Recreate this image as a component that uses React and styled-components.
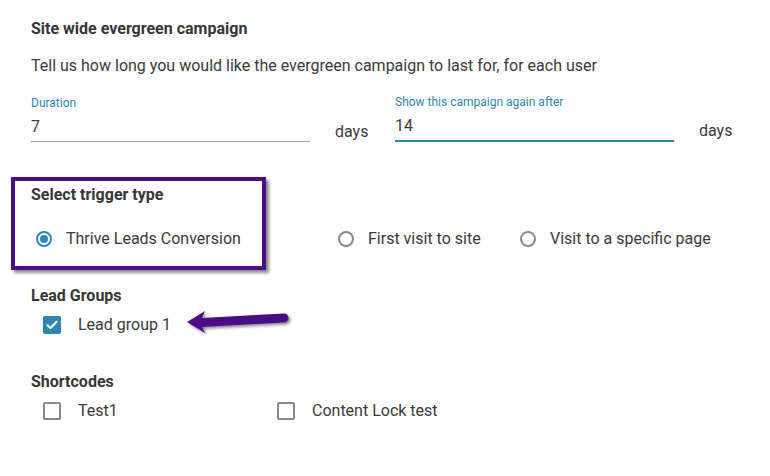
import React from 'react'
import styled, { createGlobalStyle } from 'styled-components'

const GlobalStyle = createGlobalStyle`
    body {
        margin: 0;
        background: #ffffff;
        font-family: Roboto, "Liberation Sans", sans-serif;
        color: #3a3a3a;
    }
`

const Page = styled.div`
    width: 770px;
    height: 476px;
    padding: 19px 0 0 31px;
    box-sizing: border-box;
    overflow: hidden;
`

const Heading = styled.h3`
    margin: ${(p) => p.$top || 0}px 0 0;
    font-size: 16px;
    line-height: 20px;
    font-weight: bold;
    color: #363636;
`

const Description = styled.p`
    margin: 17px 0 0;
    font-size: 16px;
    line-height: 20px;
`

const Fields = styled.div`
    margin-top: 19px;
    display: grid;
    grid-template-columns: 364px 364px;
`

const FieldRow = styled.div`
    display: flex;
    align-items: flex-end;
`

const Field = styled.div`
    width: 279px;
`

const FieldLabel = styled.div`
    font-size: 12px;
    line-height: 14px;
    color: #2f86b3;
`

const FieldInput = styled.div`
    margin-top: 7px;
    font-size: 16px;
    line-height: 20px;
    padding-bottom: 4px;
    color: #3a3a3a;
    border-bottom: ${(p) => (p.$active ? '2px solid #2f86b3' : '1px solid #9e9e9e')};
`

const Unit = styled.span`
    margin: 0 0 ${(p) => (p.$active ? 1 : 0)}px 25px;
    font-size: 16px;
    line-height: 20px;
`

const Section = styled.div`
    position: relative;
`

const Highlight = styled.div`
    position: absolute;
    left: -20px;
    top: -8px;
    width: 255px;
    height: 93px;
    box-sizing: border-box;
    border: 4px solid #4a0d87;
    box-shadow: 3px 3px 3px rgba(0, 0, 0, 0.45);
    pointer-events: none;
`

const RadioRow = styled.div`
    margin: 22px 0 0 5px;
    display: grid;
    grid-template-columns: 302px 182px auto;
    height: 24px;
    align-items: center;
`

const Option = styled.label`
    display: flex;
    align-items: center;
    font-size: 16px;
    line-height: 20px;
    color: #3a3a3a;
`

const Radio = styled.span`
    width: 16px;
    height: 16px;
    box-sizing: border-box;
    border-radius: 50%;
    border: 2px solid ${(p) => (p.$checked ? '#2f86b3' : '#8a8a8a')};
    margin-right: 14px;
    display: flex;
    align-items: center;
    justify-content: center;
    &::after {
        content: '';
        width: 8px;
        height: 8px;
        border-radius: 50%;
        background: ${(p) => (p.$checked ? '#2f86b3' : 'transparent')};
    }
`

const CheckRow = styled.div`
    position: relative;
    margin: 9px 0 0 12px;
    display: grid;
    grid-template-columns: 234px auto;
    height: 20px;
    align-items: center;
`

const Checkbox = styled.span`
    width: 18px;
    height: 18px;
    box-sizing: border-box;
    border-radius: 2px;
    margin-right: 17px;
    display: flex;
    align-items: center;
    justify-content: center;
    background: ${(p) => (p.$checked ? '#2f86b3' : '#ffffff')};
    border: 2px solid ${(p) => (p.$checked ? '#2f86b3' : '#8a8a8a')};
`

const Arrow = styled.svg`
    position: absolute;
    left: 137px;
    top: -15px;
    filter: drop-shadow(2px 2px 1.5px rgba(0, 0, 0, 0.45));
`

const Tick = () => (
    <svg width="12" height="10" viewBox="0 0 12 10">
        <path d="M1.5 5.2 L4.6 8 L10.5 1.8" fill="none" stroke="#ffffff" strokeWidth="2" strokeLinecap="round" strokeLinejoin="round" />
    </svg>
)

const App = () => (
    <Page>
        <GlobalStyle />
        <Heading>Site wide evergreen campaign</Heading>
        <Description>Tell us how long you would like the evergreen campaign to last for, for each user</Description>

        <Fields>
            <FieldRow>
                <Field>
                    <FieldLabel>Duration</FieldLabel>
                    <FieldInput>7</FieldInput>
                </Field>
                <Unit>days</Unit>
            </FieldRow>
            <FieldRow>
                <Field>
                    <FieldLabel>Show this campaign again after</FieldLabel>
                    <FieldInput $active>14</FieldInput>
                </Field>
                <Unit $active>days</Unit>
            </FieldRow>
        </Fields>

        <Section>
            <Heading $top={43}>Select trigger type</Heading>
            <RadioRow>
                <Option><Radio $checked />Thrive Leads Conversion</Option>
                <Option><Radio />First visit to site</Option>
                <Option><Radio />Visit to a specific page</Option>
            </RadioRow>
            <Highlight />
        </Section>

        <Heading $top={35}>Lead Groups</Heading>
        <CheckRow>
            <Option><Checkbox $checked><Tick /></Checkbox>Lead group 1</Option>
            <Arrow width="120" height="40" viewBox="0 0 120 40">
                <path d="M7 22 L25 11 L22 18 L104 13.5 A4.5 4.5 0 0 1 104 22.5 L22 27 L25 33 Z" fill="#4a0d87" />
            </Arrow>
        </CheckRow>

        <Heading $top={37}>Shortcodes</Heading>
        <CheckRow>
            <Option><Checkbox />Test1</Option>
            <Option><Checkbox />Content Lock test</Option>
        </CheckRow>
    </Page>
)

export default App
